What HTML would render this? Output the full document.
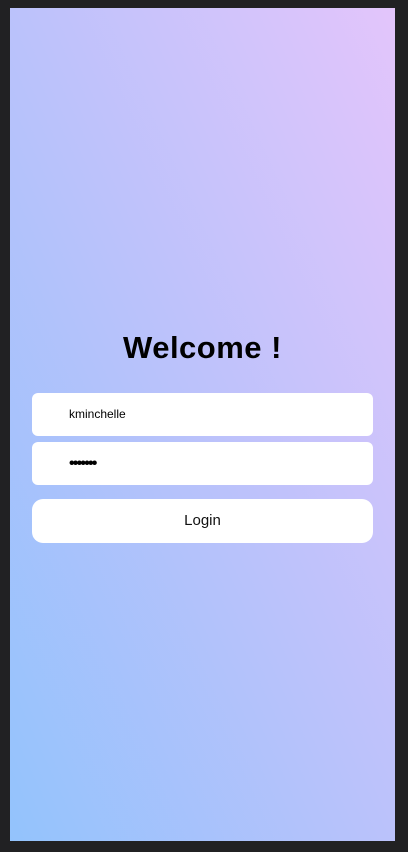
<!DOCTYPE html>
<html><head><style>
html,body{margin:0;padding:0;width:408px;height:852px;background:#212123;overflow:hidden}
.f{position:absolute;left:10px;top:8px;width:385px;height:833px;background:linear-gradient(to top right,#93c3fc 0%,#bbc2fb 50%,#e3c5fb 100%)}
h1{position:absolute;left:0;width:385px;top:321px;margin:0;text-align:center;font:bold 31px "Liberation Sans",sans-serif;color:#000;line-height:38px;letter-spacing:0.5px}
.i{position:absolute;left:22px;width:341px;height:43px;background:#fff;border-radius:6px;font:12px "Liberation Sans",sans-serif;color:#000;box-sizing:border-box;padding-left:37px;line-height:43px}
.b{position:absolute;left:22px;top:491px;width:341px;height:44px;background:#fff;border-radius:11px;text-align:center;font:15px "Liberation Sans",sans-serif;line-height:44px;color:#111}
</style></head><body>
<div class="f">
<h1>Welcome !</h1>
<div class="i" style="top:385px">kminchelle</div>
<div class="i" style="top:434px;font-size:16px;font-weight:bold;letter-spacing:-1.8px">•••••••</div>
<div class="b">Login</div>
</div>
</body></html>
